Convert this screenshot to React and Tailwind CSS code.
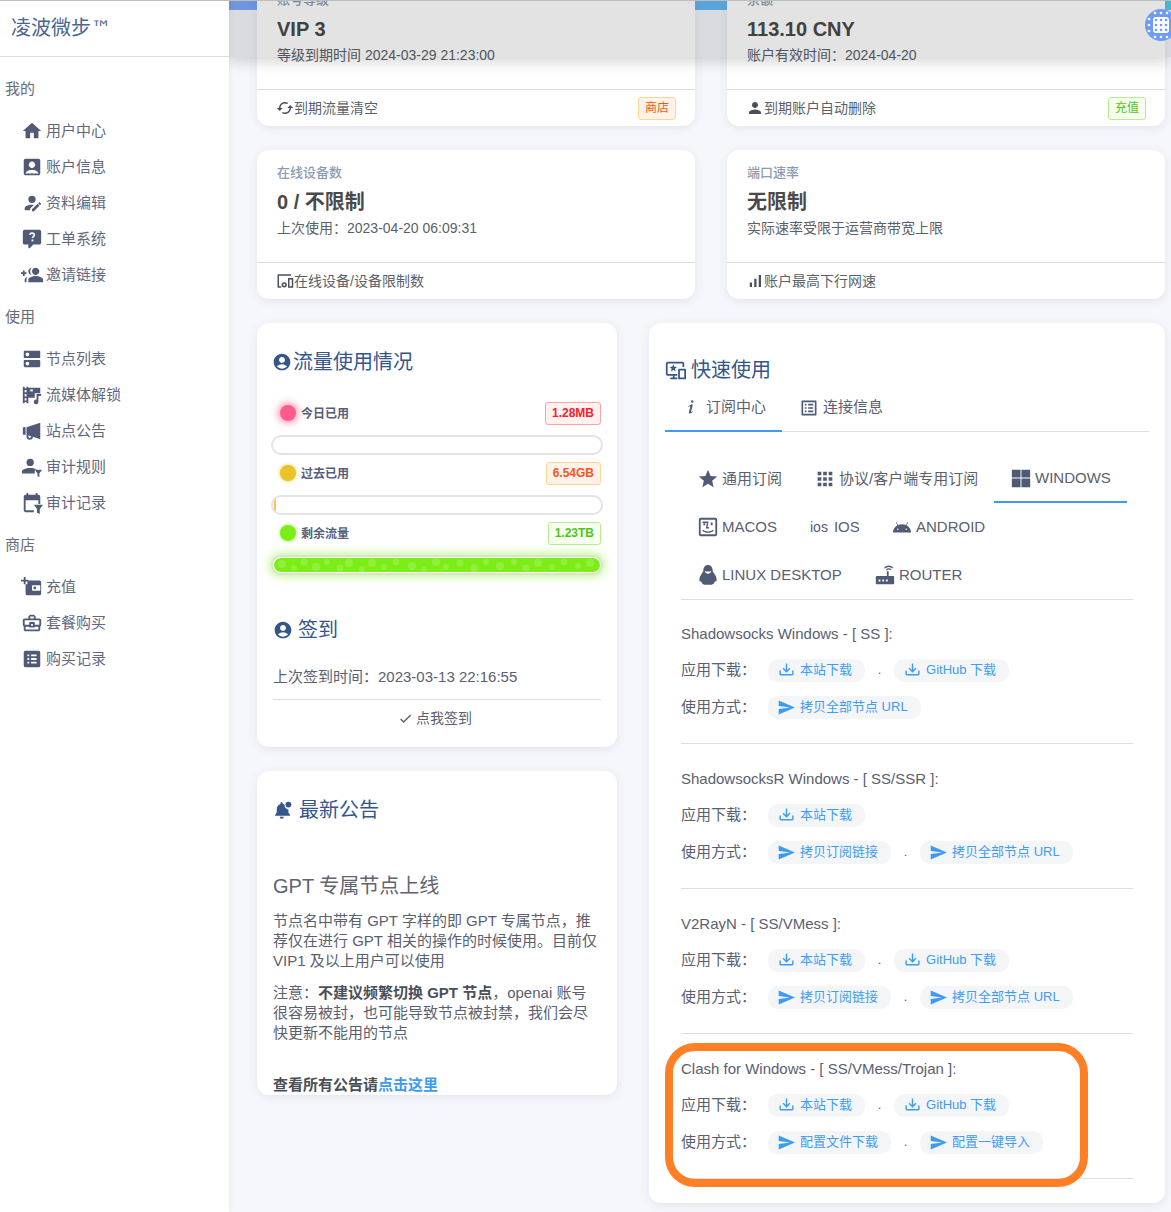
import {
  MdHome, MdAccountBox, MdGroupAdd, MdDns, MdCached, MdPerson, MdSignalCellularAlt,
  MdAccountCircle, MdOutlineListAlt, MdStar, MdApps, MdCheck, MdOutlineBusinessCenter,
} from "react-icons/md";

const P = ({ d, className = "", children }) => (
  <svg viewBox="0 0 24 24" fill="currentColor" className={className}>
    {d && <path d={d} />}
    {children}
  </svg>
);

const GroupAddLeft = ({ className }) => <MdGroupAdd className={`${className} -scale-x-100`} />;
const AccountEdit = (p) => <P {...p} d="M21.7,13.35L20.7,14.35L18.65,12.3L19.65,11.3C19.86,11.09 20.21,11.09 20.42,11.3L21.7,12.58C21.91,12.79 21.91,13.14 21.7,13.35M12,18.94L18.06,12.88L20.11,14.93L14.06,21H12V18.94M12,14C7.58,14 4,15.79 4,18V20H10V18.11L14,14.11C13.34,14.03 12.67,14 12,14M12,4A4,4 0 0,0 8,8A4,4 0 0,0 12,12A4,4 0 0,0 16,8A4,4 0 0,0 12,4Z" />;
const Ticket = (p) => (
  <P {...p} d="M4,2A2,2 0 0,0 2,4V16A2,2 0 0,0 4,18H8V21A1,1 0 0,0 9,22C9.3,22 9.6,21.9 9.8,21.7L13.5,18H20A2,2 0 0,0 22,16V4A2,2 0 0,0 20,2H4Z">
    <path d="M9.6 7.6c.2-1.3 1.2-2 2.5-2 1.4 0 2.4.8 2.4 2 0 1.700-2 1.800-2 3.400" fill="none" stroke="#fff" strokeWidth="1.700" />
    <rect x="11.500" y="12.500" width="2" height="2" fill="#fff" />
  </P>
);
const FilmMusic = (p) => (
  <P {...p} d="M2 3h2v1.500h2V3h2v1h13v6h-6v5H8v6H6v-1.500H4V21H2V3zm2 3.500V9h2V6.500H4zm0 4.500v2.500h2V11H4zm0 4.500V18h2v-2.500H4z">
    <path d="M17 11h5v2h-3v6.500a2.500 2.500 0 1 1-2-2.400V11z" />
    <rect x="10" y="6" width="3" height="2" fill="#fff" />
  </P>
);
const Bullhorn = (p) => (
  <P {...p} d="M2 8h3v8H2zM6 8l15-5v18L13 18.300V18a3.500 3.500 0 0 1-7 0v-2zM8 16.800V18a1.500 1.500 0 0 0 3 0v-.4z" />
);
const AccountFilter = (p) => (
  <P {...p} d="M10 3a4 4 0 1 1 0 8 4 4 0 0 1 0-8zM10 13c3 0 5 .6 6.200 1.300L15 16v3H1v-2c0-2.700 5-4 9-4z">
    <path d="M15 15h8l-3 4v4l-2-1v-3z" />
  </P>
);
const CalendarFilter = (p) => (
  <P {...p} d="M6 1h2v2h8V1h2v2h1a2 2 0 0 1 2 2v8h-2V9H5v11h9v2H5a2 2 0 0 1-2-2V5a2 2 0 0 1 2-2h1V1z">
    <path d="M14 14h10l-3.500 4.500V24l-3-1.500v-4z" />
  </P>
);
const WalletPlus = (p) => (
  <P {...p} d="M7 5h13a2 2 0 0 1 2 2v12a2 2 0 0 1-2 2H7a2 2 0 0 1-2-2V9h2V5zM13 10a1 1 0 0 0-1 1v4a1 1 0 0 0 1 1h8v-6h-8zm2 1.500a1.500 1.500 0 1 1 0 3 1.500 1.500 0 0 1 0-3z">
    <path d="M3 1h2v3h3v2H5v3H3V6H0V4h3z" />
  </P>
);
const ListBox = (p) => (
  <P {...p} d="M5 3h14a2 2 0 0 1 2 2v14a2 2 0 0 1-2 2H5a2 2 0 0 1-2-2V5a2 2 0 0 1 2-2zm2 4v2h2V7H7zm4 0v2h6V7h-6zm-4 4v2h2v-2H7zm4 0v2h6v-2h-6zm-4 4v2h2v-2H7zm4 0v2h6v-2h-6z" />
);
const Devices = (p) => (
  <P {...p} d="M3 3h17v2H4v14h3v2H3a1 1 0 0 1-1-1V4a1 1 0 0 1 1-1z">
    <path d="M16 8h7v13h-7V8zm2 2v9h3v-9h-3z" fillRule="evenodd" />
    <circle cx="11" cy="17" r="2.500" fill="none" stroke="currentColor" strokeWidth="2" />
  </P>
);
const BellBadge = (p) => (
  <P {...p} d="M10 2.500c.5 0 1 .5 1.100 1.100L14 6a5 5 0 0 0 4.500 5.500V15l2 3v1H2.500v-1l2-3v-4c0-3 2-5.500 4.500-6.200V3.600c0-.6.500-1.100 1-1.100zM8 20h5a2.500 2.500 0 0 1-5 0z">
    <circle cx="18.500" cy="5.500" r="3.500" />
  </P>
);
const MonitorStar = (p) => (
  <P {...p} d="M3 2h17a2 2 0 0 1 2 2v4h-2V4H3v12h11v2h-3v2h3v2H6v-2h3v-2H3a2 2 0 0 1-2-2V4a2 2 0 0 1 2-2z">
    <path d="M16 10h7a1 1 0 0 1 1 1v10a1 1 0 0 1-1 1h-7a1 1 0 0 1-1-1V11a1 1 0 0 1 1-1zm1 2v8h5v-8h-5zM9.500 5l1.200 2.800 3 .2-2.300 2 .8 3-2.700-1.600L6.800 13l.8-3-2.300-2 3-.2z" fillRule="evenodd" />
  </P>
);
const InfoVariant = (p) => <P {...p} d="M13.5,4A1.5,1.5 0 0,0 12,5.5A1.5,1.5 0 0,0 13.5,7A1.5,1.5 0 0,0 15,5.5A1.5,1.5 0 0,0 13.5,4M13.14,8.77C11.95,8.87 8.7,11.46 8.7,11.46C8.5,11.61 8.56,11.6 8.72,11.88C8.88,12.15 8.86,12.17 9.05,12.04C9.25,11.91 9.58,11.7 10.13,11.36C12.25,10 10.47,13.14 9.56,18.43C9.2,21.05 11.56,19.7 12.17,19.3C12.77,18.91 14.38,17.8 14.54,17.69C14.76,17.54 14.6,17.42 14.43,17.17C14.31,17 14.19,17.12 14.19,17.12C13.54,17.55 12.35,18.45 12.19,17.88C12,17.31 13.22,13.4 13.89,10.71C14,10.07 14.3,8.67 13.14,8.77Z" />;
const Microsoft = (p) => <P {...p} d="M2,3H11.500V11.500H2V3M11.500,22H2V12.500H11.500V22M22,3V11.500H12.500V3H22M22,22H12.500V12.500H22V22Z" />;
const Finder = (p) => (
  <P {...p} d="M4 2h16a2 2 0 0 1 2 2v16a2 2 0 0 1-2 2H4a2 2 0 0 1-2-2V4a2 2 0 0 1 2-2zm0 2v16h16V4H4z">
    <path d="M6 6h6.500l-1 6H13v1.500H9.700L10.700 7.500H6zM15 7h2v3h-2zM7 8h2v2H7zM6.500 15c3 2.500 8 2.500 11 0l.8 1c-3.500 3-9 3-12.600 0z" />
  </P>
);
const Android = (p) => <P {...p} d="M16.61 15.15C16.15 15.15 15.77 14.78 15.77 14.32S16.15 13.5 16.61 13.5H16.61C17.07 13.5 17.45 13.86 17.45 14.32C17.45 14.78 17.07 15.15 16.61 15.15M7.41 15.15C6.95 15.15 6.57 14.78 6.57 14.32C6.57 13.86 6.95 13.5 7.41 13.5H7.41C7.87 13.5 8.24 13.86 8.24 14.32C8.24 14.78 7.87 15.15 7.41 15.15M16.91 10.14L18.58 7.26C18.67 7.09 18.61 6.88 18.45 6.79C18.28 6.69 18.07 6.75 18 6.92L16.29 9.83C14.95 9.22 13.5 8.9 12 8.91C10.47 8.91 9 9.24 7.73 9.82L6.04 6.91C5.95 6.74 5.74 6.68 5.57 6.78C5.4 6.87 5.35 7.08 5.44 7.25L7.1 10.13C4.25 11.69 2.29 14.58 2 18H22C21.72 14.59 19.77 11.7 16.91 10.14H16.91Z" />;
const Penguin = (p) => (
  <P {...p} d="M12 1c3 0 5 2.500 5 5.500 0 1 .3 1.800 1 2.800 2 2.700 3.500 5.700 3.500 8 0 1.500-1 2-2 1.500-.3 2-2 3.700-3.500 3.700H8c-1.500 0-3.200-1.700-3.500-3.700-1 .5-2 0-2-1.500 0-2.300 1.500-5.300 3.500-8 .7-1 1-1.800 1-2.800C7 3.500 9 1 12 1z">
    <path d="M8.500 7.500c2 .8 5 .8 7 0-.3 2-1.800 3-3.500 3s-3.200-1-3.500-3z" fill="#fff" />
  </P>
);
const RouterIcon = (p) => (
  <P {...p} d="M3 13h11V8h2v5h5a1 1 0 0 1 1 1v7a1 1 0 0 1-1 1H3a1 1 0 0 1-1-1v-7a1 1 0 0 1 1-1zm2 4v2h2v-2H5zm4 0v2h2v-2H9zm4 0v2h2v-2h-2z">
    <path d="M11.500 4.500a6 6 0 0 1 9 0M13.500 6.500a3.200 3.200 0 0 1 5 0" fill="none" stroke="currentColor" strokeWidth="1.400" />
  </P>
);
const TrayDown = (p) => <P {...p} d="M2 12H4V17H20V12H22V17C22 18.11 21.11 19 20 19H4C2.9 19 2 18.1 2 17V12M12 15L17.55 9.54L16.13 8.13L13 11.25V2H11V11.25L7.88 8.13L6.46 9.55L12 15Z" />;
const Send = (p) => <P {...p} d="M1,22L24,12L1,2V10L17,12L1,14V22Z" />;

const navGroups = [
  {
    label: "我的",
    items: [
      ["用户中心", MdHome],
      ["账户信息", MdAccountBox],
      ["资料编辑", AccountEdit],
      ["工单系统", Ticket],
      ["邀请链接", GroupAddLeft],
    ],
  },
  {
    label: "使用",
    items: [
      ["节点列表", MdDns],
      ["流媒体解锁", FilmMusic],
      ["站点公告", Bullhorn],
      ["审计规则", AccountFilter],
      ["审计记录", CalendarFilter],
    ],
  },
  {
    label: "商店",
    items: [
      ["充值", WalletPlus],
      ["套餐购买", MdOutlineBusinessCenter],
      ["购买记录", ListBox],
    ],
  },
];

const subTabs = [
  [
    { name: "通用订阅", Icon: MdStar, cls: "w-[118px] pl-[16px]" },
    { name: "协议/客户端专用订阅", Icon: MdApps, cls: "w-[195px] pl-[15px]" },
    { name: "WINDOWS", Icon: Microsoft, cls: "w-[133px] pl-[16px] border-b-2 border-[#3d9bf0]" },
  ],
  [
    { name: "MACOS", Icon: Finder, cls: "w-[112px] pl-[16px]" },
    { name: "IOS", ios: true, cls: "w-[83px] pl-[17px]" },
    { name: "ANDROID", Icon: Android, cls: "pl-[15px]" },
  ],
  [
    { name: "LINUX DESKTOP", Icon: Penguin, cls: "w-[177px] pl-[16px]" },
    { name: "ROUTER", Icon: RouterIcon, cls: "pl-[16px]" },
  ],
];

const clients = [
  {
    title: "Shadowsocks Windows - [ SS ]:",
    downloads: ["本站下载", "GitHub 下载"],
    usage: ["拷贝全部节点 URL"],
  },
  {
    title: "ShadowsocksR Windows - [ SS/SSR ]:",
    downloads: ["本站下载"],
    usage: ["拷贝订阅链接", "拷贝全部节点 URL"],
  },
  {
    title: "V2RayN - [ SS/VMess ]:",
    downloads: ["本站下载", "GitHub 下载"],
    usage: ["拷贝订阅链接", "拷贝全部节点 URL"],
  },
  {
    title: "Clash for Windows - [ SS/VMess/Trojan ]:",
    downloads: ["本站下载", "GitHub 下载"],
    usage: ["配置文件下载", "配置一键导入"],
  },
];

const bubbles = [
  [8, 6, 4], [20, 10, 3], [30, 4, 3.500], [42, 9, 4], [53, 4, 3], [66, 10, 3.500], [75, 5, 4], [88, 11, 3], [98, 5, 4],
  [110, 9, 3], [122, 4, 3.500], [138, 8, 4], [150, 11, 3], [162, 4, 4], [172, 9, 3], [186, 5, 3.500], [200, 10, 4], [212, 4, 3],
  [226, 8, 4], [240, 4, 3], [252, 10, 3.500], [264, 5, 4], [278, 9, 3], [290, 4, 3.500], [304, 8, 3], [316, 5, 4],
];

function StatCard({ label, value, desc, FooterIcon, footer, tag }) {
  return (
    <div className="bg-white rounded-[12px] shadow-[0_2px_10px_rgba(60,70,110,0.1)] h-[149px] flex flex-col">
      <div className="h-[113px] px-5 pt-[14px] border-b border-[#dcdcdc]">
        <div className="text-[13px] leading-[18px] font-medium text-[#8c9bb0]">{label}</div>
        <div className="mt-[8px] text-[20px] leading-[24px] font-bold text-[#4a4a4a]">{value}</div>
        <div className="mt-[2px] text-[14px] leading-[24px] text-[#5a5f68]">{desc}</div>
      </div>
      <div className="flex-1 pl-5 pr-[19px] flex items-center justify-between">
        <div className="flex items-center text-[14px] text-[#5a5f68]">
          <FooterIcon className="w-[18px] h-[18px] -ml-[1px] text-[#4a4f58]" />
          <span>{footer}</span>
        </div>
        {tag}
      </div>
    </div>
  );
}

function Tag({ children, cls }) {
  return (
    <span className={`h-[23px] flex items-center px-[6px] rounded-[3px] border text-[12px] ${cls}`}>{children}</span>
  );
}

function UsageRow({ dot, label, badge, badgeCls }) {
  return (
    <div className="h-9 mb-1 flex items-center justify-between">
      <div className="flex items-center">
        <span className={`ml-[7px] w-4 h-4 rounded-full ${dot}`} />
        <span className="ml-[5px] pt-[2px] text-[12px] font-bold text-[#55607a]">{label}</span>
      </div>
      <span className={`h-[23px] flex items-center px-[6px] rounded-[3px] border text-[12px] font-bold ${badgeCls}`}>{badge}</span>
    </div>
  );
}

function LinkButton({ Icon, text }) {
  return (
    <span className="h-[23px] inline-flex items-center pl-[10px] pr-[13px] rounded-[10px] bg-[#f4f5f7] text-[13px] text-[#3f9cf3] whitespace-nowrap">
      <Icon className="w-[17px] h-[17px] mr-[5px] text-[#3d9bf0]" />
      {text}
    </span>
  );
}

function LinkRow({ label, Icon, links }) {
  return (
    <div className="h-9 flex items-center text-[15px] text-[#5a6070]">
      <span className="w-[87px]">{label}</span>
      {links.map((text, i) => (
        <span key={text} className="flex items-center">
          {i > 0 && <span className="w-[29px] text-center text-[13px]">.</span>}
          <LinkButton Icon={Icon} text={text} />
        </span>
      ))}
    </div>
  );
}

export default function App() {
  return (
    <div className="relative w-[1171px] h-[1212px] overflow-hidden flex bg-[#f5f7fb] [font-family:'Liberation_Sans','Noto_Sans_CJK_SC',sans-serif]">
      <aside className="relative z-20 w-[229px] shrink-0 bg-white shadow-[1px_0_4px_rgba(60,70,110,0.08)]">
        <div className="h-[57px] border-b border-[#dcdcdc] flex items-center pl-[11px] pb-[1px] text-[20px] text-[#4a6592]">
          凌波微步
          <span className="[font-family:'DejaVu_Sans',sans-serif] text-[20px] leading-none">™</span>
        </div>
        <nav className="pt-[14px] text-[15px] text-[#5f6880]">
          {navGroups.map((group) => (
            <div key={group.label} className="mb-[6px]">
              <div className="h-9 mb-[6px] pl-[5px] flex items-center text-[#666c78]">{group.label}</div>
              {group.items.map(([name, Icon]) => (
                <div key={name} className="h-9 flex items-center">
                  <span className="w-[46px] flex justify-end pr-[3px]">
                    <Icon className="w-[22px] h-[22px] text-[#505a76]" />
                  </span>
                  {name}
                </div>
              ))}
            </div>
          ))}
        </nav>
      </aside>

      <main className="relative flex-1 pl-[28px] pr-[6px]">
        <div className="absolute top-0 inset-x-0 h-[10px] bg-gradient-to-r from-[#7ea8f8] via-[#66b8f8] to-[#55d0e8]" />

        <div className="relative -mt-[23px] grid grid-cols-2 gap-x-[32px] gap-y-[24px]">
          <StatCard
            label="账号等级"
            value="VIP 3"
            desc="等级到期时间 2024-03-29 21:23:00"
            FooterIcon={MdCached}
            footer="到期流量清空"
            tag={<Tag cls="bg-[#fff2e8] border-[#ffd591] text-[#fa541c]">商店</Tag>}
          />
          <StatCard
            label="余额"
            value="113.10 CNY"
            desc="账户有效时间：2024-04-20"
            FooterIcon={MdPerson}
            footer="到期账户自动删除"
            tag={<Tag cls="bg-[#f6ffed] border-[#b7eb8f] text-[#52c41a]">充值</Tag>}
          />
          <StatCard
            label="在线设备数"
            value="0 / 不限制"
            desc="上次使用：2023-04-20 06:09:31"
            FooterIcon={Devices}
            footer="在线设备/设备限制数"
          />
          <StatCard
            label="端口速率"
            value="无限制"
            desc="实际速率受限于运营商带宽上限"
            FooterIcon={MdSignalCellularAlt}
            footer="账户最高下行网速"
          />
        </div>

        <div className="relative mt-[24px] flex gap-[32px] items-start">
          <div className="w-[360px] shrink-0 flex flex-col gap-[24px]">
            <section className="bg-white rounded-[12px] shadow-[0_2px_10px_rgba(60,70,110,0.1)] h-[424px] px-4 pt-[25px]">
              <h3 className="h-7 flex items-center text-[20px] text-[#34568b]">
                <MdAccountCircle className="w-5 h-5 mr-[1px] -ml-[1px]" />
                流量使用情况
              </h3>
              <div className="mt-[19px]">
                <UsageRow
                  dot="bg-[#ff5c8d] shadow-[0_0_6px_3px_rgba(255,92,141,0.5)]"
                  label="今日已用"
                  badge="1.28MB"
                  badgeCls="bg-[#fff1f0] border-[#ffa39e] text-[#f5222d]"
                />
                <div className="-mx-[2px] h-5 rounded-full border-2 border-[#e4e4e4] bg-white" />
                <UsageRow
                  dot="bg-[#e8c32a] shadow-[0_0_3px_1px_rgba(232,195,42,0.5)]"
                  label="过去已用"
                  badge="6.54GB"
                  badgeCls="bg-[#fff2e8] border-[#ffd591] text-[#fa541c]"
                />
                <div className="-mx-[2px] h-5 rounded-full border-2 border-[#e4e4e4] bg-white overflow-hidden p-[1px]">
                  <div className="w-[2px] h-full bg-[#eec94a] rounded-l-full" />
                </div>
                <UsageRow
                  dot="bg-[#7ded17] shadow-[0_0_3px_1px_rgba(125,237,23,0.45)]"
                  label="剩余流量"
                  badge="1.23TB"
                  badgeCls="bg-[#f6ffed] border-[#b7eb8f] text-[#52c41a]"
                />
                <div className="-mx-[2px] h-5 rounded-full border-2 border-[#d8e6c8] bg-white p-[1px] shadow-[0_0_8px_2px_rgba(125,237,23,0.45)]">
                  <svg className="w-full h-full rounded-full bg-[#7ded17]" viewBox="0 0 326 14" preserveAspectRatio="none">
                    {bubbles.map(([cx, cy, r]) => (
                      <circle key={cx} cx={cx} cy={cy} r={r} fill="#fff" fillOpacity="0.16" />
                    ))}
                  </svg>
                </div>
              </div>
              <h3 className="mt-[41px] h-7 flex items-center text-[20px] text-[#34568b]">
                <MdAccountCircle className="w-5 h-5 mr-[5px]" />
                签到
              </h3>
              <div className="mt-[19px] h-7 flex items-center text-[15px] text-[#5a6070] whitespace-nowrap">上次签到时间：2023-03-13 22:16:55</div>
              <div className="mt-[8px] border-t border-[#dfdfdf] h-[38px] pr-1 flex items-center justify-center text-[14px] text-[#5a6070]">
                <MdCheck className="w-[15px] h-[15px] mr-[3px]" />
                点我签到
              </div>
            </section>

            <section className="bg-white rounded-[12px] shadow-[0_2px_10px_rgba(60,70,110,0.1)] h-[324px] overflow-hidden px-4 pt-[25px]">
              <h3 className="h-7 flex items-center text-[20px] text-[#34568b]">
                <BellBadge className="w-5 h-5 mr-[6px]" />
                最新公告
              </h3>
              <h4 className="mt-[48px] h-7 flex items-center text-[20px] text-[#5f6470]">GPT 专属节点上线</h4>
              <p className="mt-[11px] text-[15px] leading-[20px] text-[#5a6070]">
                节点名中带有 GPT 字样的即 GPT 专属节点，推荐仅在进行 GPT 相关的操作的时候使用。目前仅 VIP1 及以上用户可以使用
              </p>
              <p className="mt-[12px] text-[15px] leading-[20px] text-[#5a6070]">
                注意：<b className="text-[#4a4f58]">不建议频繁切换 GPT 节点</b>，openai 账号很容易被封，也可能导致节点被封禁，我们会尽快更新不能用的节点
              </p>
              <p className="mt-[32px] text-[15px] leading-[20px] font-bold text-[#4a4f58]">
                查看所有公告请<span className="text-[#3d9bf0]">点击这里</span>
              </p>
            </section>
          </div>

          <section className="w-[516px] shrink-0 h-[880px] bg-white rounded-[12px] shadow-[0_2px_10px_rgba(60,70,110,0.1)] px-4 pt-[33px]">
            <h3 className="h-7 flex items-center text-[20px] text-[#34568b]">
              <MonitorStar className="w-[21px] h-[21px] mr-[5px]" />
              快速使用
            </h3>
            <div className="h-12 flex border-b border-[#dfdfdf] text-[15px] text-[#5a6070]">
              <div className="w-[117px] -mb-px flex items-center justify-center border-b-2 border-[#3d9bf0]">
                <InfoVariant className="w-5 h-5 mr-[5px] text-[#505a76]" />
                订阅中心
              </div>
              <div className="pl-[17px] flex items-center">
                <MdOutlineListAlt className="w-5 h-5 mr-[4px] text-[#505a76]" />
                连接信息
              </div>
            </div>

            <div className="mx-4 mt-[23px] text-[15px] text-[#5a6070]">
              {subTabs.map((row, i) => (
                <div key={i} className="h-12 flex">
                  {row.map(({ name, Icon, cls, ios }) => (
                    <div key={name} className={`h-12 flex items-center ${cls}`}>
                      {ios ? (
                        <span className="mr-[6px] text-[14px] font-medium text-[#505a76]">ios</span>
                      ) : (
                        <Icon className="w-[22px] h-[22px] mr-[3px] text-[#505a76]" />
                      )}
                      {name}
                    </div>
                  ))}
                </div>
              ))}
              <div className="border-t border-[#dfdfdf] -mb-px" />
              {clients.map((client) => (
                <div key={client.title} className="pt-[23px] pb-[18px] border-b border-[#dfdfdf]">
                  <div className="h-6 mb-[6px] flex items-center text-[#5a6070]">{client.title}</div>
                  <LinkRow label="应用下载：" Icon={TrayDown} links={client.downloads} />
                  <div className="mt-px">
                    <LinkRow label="使用方式：" Icon={Send} links={client.usage} />
                  </div>
                </div>
              ))}
            </div>
          </section>
        </div>

        {/* translucent navbar lying over the scrolled cards */}
        <div className="absolute z-10 top-0 inset-x-0 h-[57px] bg-[rgba(0,0,0,0.11)] shadow-[0_4px_14px_rgba(0,0,0,0.18)]" />
      </main>

      {/* hand-drawn annotation on the screenshot */}
      <div className="absolute z-30 left-[665px] top-[1043px] w-[423px] h-[144px] border-[8px] border-[#ff7f27] rounded-[30px]" />

      <svg className="absolute z-30 left-[1145px] top-[9px] w-[32px] h-[32px]" viewBox="0 0 32 32">
        <circle cx="16" cy="16" r="16" fill="#6e9cf5" />
        <rect x="8" y="8" width="16" height="16" rx="3" fill="#fff" />
        {[11, 16, 21].flatMap((y) =>
          [11, 16, 21].map((x) => <circle key={`${x}-${y}`} cx={x} cy={y} r="1.300" fill="#6e9cf5" />)
        )}
        {[10, 16, 22].flatMap((n) => [
          <circle key={`t${n}`} cx={n} cy="4" r="1.300" fill="#fff" />,
          <circle key={`b${n}`} cx={n} cy="28" r="1.300" fill="#fff" />,
          <circle key={`l${n}`} cx="4" cy={n} r="1.300" fill="#fff" />,
        ])}
      </svg>

      <div className="absolute z-30 top-0 inset-x-0 h-px bg-[#bdbdbd]" />
    </div>
  );
}
